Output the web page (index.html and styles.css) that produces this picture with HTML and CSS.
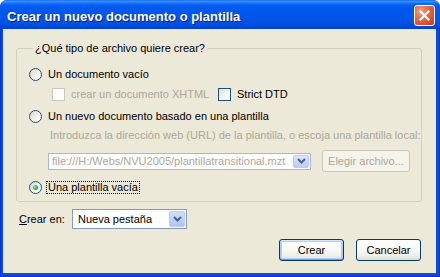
FILE: index.html
```html
<!DOCTYPE html>
<html>
<head>
<meta charset="utf-8">
<link rel="stylesheet" href="styles.css">
</head>
<body>
<div class="window">
  <div class="titlebar">
    <span class="title">Crear un nuevo documento o plantilla</span>
    <span class="close"><svg width="19" height="19" viewBox="0 0 19 19"><path d="M5.5 5.5 L13.5 13.5 M13.5 5.5 L5.5 13.5" stroke="#fff" stroke-width="2.2" stroke-linecap="square"/></svg></span>
  </div>
  <div class="frame">
    <div class="client">
      <fieldset class="group">
        <legend>¿Qué tipo de archivo quiere crear?</legend>
        <div class="row r1"><span class="radio"></span><span>Un documento vacío</span></div>
        <div class="row r2"><span class="check disabled"></span><span class="dis xhtml">crear un documento XHTML</span><span class="check"></span><span>Strict DTD</span></div>
        <div class="row r3"><span class="radio"></span><span>Un nuevo documento basado en una plantilla</span></div>
        <div class="hint dis">Introduzca la dirección web (URL) de la plantilla, o escoja una plantilla local:</div>
        <div class="row r5">
          <div class="combo combo-dis">
            <span class="combo-text dis">file:///H:/Webs/NVU2005/plantillatransitional.mzt</span>
            <span class="combo-btn"><svg width="9" height="6" viewBox="0 0 9 6"><path d="M1 1 L4.5 4.5 L8 1" fill="none" stroke="#4D6185" stroke-width="2"/></svg></span>
          </div>
          <button class="btn btn-dis">Elegir archivo...</button>
        </div>
        <div class="row r6"><span class="radio checked"></span><span class="focus">Una plantilla vacía</span></div>
      </fieldset>
      <div class="where">
        <span class="label"><u>C</u>rear en:</span>
        <div class="combo combo-main">
          <span class="combo-text">Nueva pestaña</span>
          <span class="combo-btn"><svg width="9" height="6" viewBox="0 0 9 6"><path d="M1 1 L4.5 4.5 L8 1" fill="none" stroke="#4D6185" stroke-width="2"/></svg></span>
        </div>
      </div>
      <div class="buttons">
        <button class="btn btn-default">Crear</button>
        <button class="btn">Cancelar</button>
      </div>
    </div>
  </div>
</div>
</body>
</html>
```

FILE: styles.css
```css
html, body {
  margin: 0;
  padding: 0;
  background: #ffffff;
}
body {
  font-family: "Liberation Sans", Arial, sans-serif;
  font-size: 11px;
  color: #000;
}
.window {
  width: 440px;
  height: 277px;
  display: flex;
  flex-direction: column;
  border-radius: 7px 7px 0 0;
  overflow: hidden;
  background: #0A48DA;
}
.titlebar {
  height: 29px;
  flex: none;
  display: flex;
  align-items: flex-start;
  justify-content: space-between;
  padding: 0 5px 0 7px;
  box-sizing: border-box;
  background: linear-gradient(to bottom,
    #0A5EEA 0px, #3C94FF 1px, #2F8AFF 2px, #1774FA 3px, #0661F2 5px,
    #0058EE 8px, #0056EA 15px, #0055E8 20px, #0050E0 24px, #0048D4 27px, #0040C8 29px);
}
.title {
  font-family: "Liberation Sans", Arial, sans-serif;
  font-weight: bold;
  font-size: 13px;
  line-height: 15px;
  margin-top: 9px;
  color: #fff;
  text-shadow: 1px 1px 0 #0A1E8C;
}
.close {
  width: 21px;
  height: 21px;
  margin-top: 5px;
  box-sizing: border-box;
  border: 1px solid #fff;
  border-radius: 3px;
  display: flex;
  align-items: center;
  justify-content: center;
  background: radial-gradient(circle at 30% 28%, #F4A487 0%, #E8704B 35%, #D9502D 70%, #C23A1A 100%);
}
.frame {
  flex: 1;
  display: flex;
  padding: 0 4px 4px 3px;
  background: #0B4BDC;
  box-shadow: inset 1px 0 0 #0831D9, inset -1px 0 0 #0831D9, inset 0 -1px 0 #0831D9;
}
.client {
  flex: 1;
  background: #ECE9D8;
  display: flex;
  flex-direction: column;
  padding: 13px 14px 0 13px;
}
.group {
  margin: 0;
  padding: 0 0 7px 12px;
  border: 1px solid #D0D0BF;
  border-radius: 3px;
  display: flex;
  flex-direction: column;
  align-items: flex-start;
  min-width: 0;
}
.group legend {
  margin-left: 4px;
  padding: 0 2px;
  line-height: 13px;
}
.row {
  display: flex;
  align-items: center;
  gap: 6px;
  line-height: 13px;
}
.r1 { margin-top: 13px; height: 13px; }
.r2 { margin-top: 7px; height: 13px; padding-left: 23px; }
.r3 { margin-top: 9px; height: 13px; }
.hint { margin-top: 6px; margin-left: 21px; line-height: 13px; white-space: nowrap; }
.r5 { margin-top: 8px; height: 22px; padding-left: 19px; gap: 11px; }
.r6 { margin-top: 9px; height: 13px; }
.xhtml { width: 141px; flex: none; white-space: nowrap; }
.dis { color: #ACA899; }
.radio {
  width: 13px;
  height: 13px;
  box-sizing: border-box;
  border: 1px solid #1C5180;
  border-radius: 50%;
  background: linear-gradient(135deg, #D6D5CB 0%, #EEEDE6 45%, #FFFFFF 85%);
  flex: none;
  display: flex;
  align-items: center;
  justify-content: center;
}
.radio.checked::after {
  content: "";
  width: 5px;
  height: 5px;
  border-radius: 50%;
  background: radial-gradient(circle at 35% 35%, #9BE89A 0%, #3DBB3D 45%, #1E9A1E 100%);
}
.check {
  width: 13px;
  height: 13px;
  box-sizing: border-box;
  border: 1px solid #1C5180;
  background: linear-gradient(135deg, #DCDCD7 0%, #F2F2EE 50%, #FFFFFF 90%);
  flex: none;
}
.check.disabled {
  border-color: #CAC8BB;
  background: #FFFFFF;
}
.focus {
  display: inline-block;
  line-height: 11px;
  height: 11px;
  padding: 0 1px;
  margin-left: -1px;
  outline: 1px dotted #000;
  white-space: nowrap;
}
.combo {
  display: flex;
  box-sizing: border-box;
  border: 1px solid #7F9DB9;
  background: #fff;
  padding: 1px;
  flex: none;
}
.combo-text {
  flex: 1;
  white-space: nowrap;
  overflow: hidden;
  display: flex;
  align-items: center;
}
.combo-btn {
  width: 16px;
  flex: none;
  border-radius: 2px;
  box-sizing: border-box;
  border: 1px solid #BACCF6;
  background: linear-gradient(to bottom, #D2DEFC 0%, #BFD1FA 50%, #AEC4F7 100%);
  display: flex;
  align-items: center;
  justify-content: center;
}
.combo-dis {
  width: 263px;
  height: 17px;
  border-color: #A5B7DC;
}
.combo-dis .combo-text { padding-left: 2px; }
.combo-dis .combo-btn {
  background: linear-gradient(to bottom, #DCE6FD 0%, #C9D8FB 50%, #BCCEF8 100%);
}
.where {
  margin-top: 7px;
  display: flex;
  align-items: center;
  height: 20px;
}
.label {
  width: 56px;
  flex: none;
  padding-left: 3px;
  box-sizing: border-box;
}
.combo-main {
  width: 115px;
  height: 20px;
}
.combo-main .combo-text { padding-left: 4px; }
.buttons {
  margin-top: 10px;
  margin-right: 1px;
  display: flex;
  justify-content: flex-end;
  gap: 12px;
}
.btn {
  font-family: "Liberation Sans", Arial, sans-serif;
  font-size: 11px;
  color: #000;
  width: 65px;
  height: 22px;
  padding: 0;
  box-sizing: border-box;
  border: 1px solid #003C74;
  border-radius: 3px;
  background: linear-gradient(to bottom, #FFFFFF 0%, #FBFBF9 40%, #F0EFE9 80%, #DCD8CC 100%);
  flex: none;
}
.btn-default {
  box-shadow: inset 0 1px 0 #CEE7FF, inset 0 -1px 0 #6D9BE6, inset 1px 0 0 #A9C6F5, inset -1px 0 0 #A9C6F5, inset 0 0 0 2px #B9D1F7;
}
.btn-dis {
  width: 88px;
  height: 22px;
  color: #ACA899;
  border-color: #C9C7BA;
  background: #F5F4EA;
}
```
